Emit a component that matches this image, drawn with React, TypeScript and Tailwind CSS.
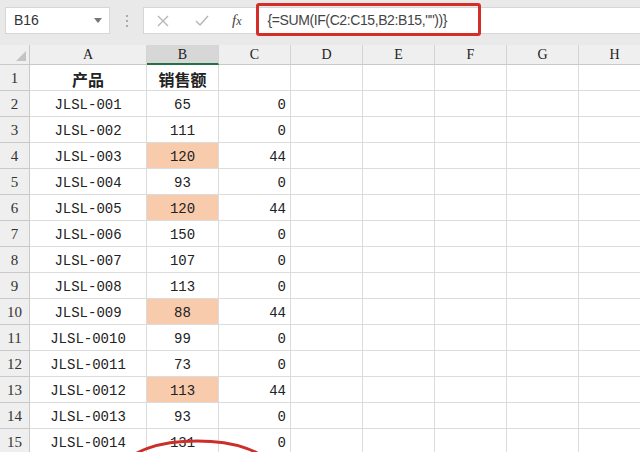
const cols = ["A", "B", "C", "D", "E", "F", "G", "H"];

const rows: [string, string, string, boolean][] = [
  ["JLSL-001", "65", "0", false],
  ["JLSL-002", "111", "0", false],
  ["JLSL-003", "120", "44", true],
  ["JLSL-004", "93", "0", false],
  ["JLSL-005", "120", "44", true],
  ["JLSL-006", "150", "0", false],
  ["JLSL-007", "107", "0", false],
  ["JLSL-008", "113", "0", false],
  ["JLSL-009", "88", "44", true],
  ["JLSL-0010", "99", "0", false],
  ["JLSL-0011", "73", "0", false],
  ["JLSL-0012", "113", "44", true],
  ["JLSL-0013", "93", "0", false],
  ["JLSL-0014", "131", "0", false],
];

const grid = "grid grid-cols-[30px_117px_72px_72px_72px_72px_72px_72px_72px]";
const mono = "font-['Liberation_Mono','Noto_Sans_CJK_SC',monospace]";
const serif = "font-['Liberation_Serif',serif]";

function EmptyCells() {
  return (
    <>
      {[0, 1, 2, 3, 4].map((i) => (
        <div key={i} className="border-r border-b border-[#dcdcdc] bg-white" />
      ))}
    </>
  );
}

function RowHead({ n }: { n: number }) {
  return (
    <div className={`flex items-end justify-center pb-[1px] bg-[#efefef] border-r border-b border-[#c9c9c9] text-[15px] text-[#333] ${serif}`}>
      {n}
    </div>
  );
}

export default function App() {
  return (
    <main className="relative w-[640px] h-[452px] overflow-hidden bg-[#e9e9e9]">
      {/* formula toolbar */}
      <div className="h-[45px] flex items-start pt-[7px] pl-[5px] font-['Liberation_Sans',sans-serif]">
        <div className="w-[105px] h-[27px] bg-white border border-[#d6d6d6] flex items-center justify-between pl-[8px] pr-[7px] text-[14px] text-[#333]">
          <span>B16</span>
          <svg width="8" height="5" viewBox="0 0 8 5">
            <path d="M0 0 L8 0 L4 5 Z" fill="#777" />
          </svg>
        </div>
        <div className="w-[33px] h-[27px] flex flex-col items-center justify-center gap-[3px]">
          <span className="w-[2px] h-[2px] bg-[#aaa]" />
          <span className="w-[2px] h-[2px] bg-[#aaa]" />
          <span className="w-[2px] h-[2px] bg-[#aaa]" />
        </div>
        <div className="relative flex-1 h-[27px] bg-white border-l border-y border-[#d6d6d6] flex items-center">
          <svg className="ml-[13px]" width="12" height="12" viewBox="0 0 12 12">
            <path d="M1 1 L11 11 M11 1 L1 11" stroke="#b5b5b5" strokeWidth="1.3" fill="none" />
          </svg>
          <svg className="ml-[26px]" width="14" height="11" viewBox="0 0 14 11">
            <path d="M1 6 L5 10 L13 1" stroke="#b5b5b5" strokeWidth="1.4" fill="none" />
          </svg>
          <span className={`ml-[23px] italic text-[15px] text-[#444] ${serif}`}>
            f<span className="text-[12px]">x</span>
          </span>
          <div className="absolute left-[112px] top-[-5px] w-[225px] h-[33px] border-[3px] border-[#d52d27] rounded-[3px]" />
          <span className="ml-[26px] text-[14px] text-[#444] tracking-[-0.4px]">
            {'{=SUM(IF(C2:C15,B2:B15,""))}'}
          </span>
        </div>
      </div>

      {/* sheet */}
      <div className={`${grid} text-[#222]`}>
        {/* column header */}
        <div className="h-[20px] bg-[#efefef] border-r border-b border-[#c9c9c9] flex items-end justify-end p-[3px]">
          <svg width="10" height="10" viewBox="0 0 10 10">
            <path d="M10 0 L10 10 L0 10 Z" fill="#c4c4c4" />
          </svg>
        </div>
        {cols.map((c) => (
          <div
            key={c}
            className={`h-[20px] flex items-center justify-center border-r border-[#d4d4d4] text-[14px] ${serif} ${
              c === "B" ? "bg-[#d7d7d7] border-b-2 border-b-[#217346]" : "bg-[#efefef] border-b border-b-[#c9c9c9]"
            }`}
          >
            {c}
          </div>
        ))}

        {/* row 1 */}
        <RowHead n={1} />
        <div className="h-[26px] flex items-center justify-center pt-[2px] border-r border-b border-[#dcdcdc] bg-white font-bold text-[16px] font-['Noto_Sans_CJK_SC',sans-serif]">
          产品
        </div>
        <div className="h-[26px] flex items-center justify-center pt-[2px] border-r border-b border-[#dcdcdc] bg-white font-bold text-[16px] font-['Noto_Sans_CJK_SC',sans-serif]">
          销售额
        </div>
        <div className="border-r border-b border-[#dcdcdc] bg-white" />
        <EmptyCells />

        {rows.map(([name, sales, val, hi], i) => (
          <div key={name} className="contents">
            <RowHead n={i + 2} />
            <div className={`h-[26px] flex items-center justify-center pt-[4px] border-r border-b border-[#dcdcdc] bg-white text-[14px] ${mono}`}>
              {name}
            </div>
            <div
              className={`h-[26px] flex items-center justify-center pt-[4px] border-r border-b border-[#dcdcdc] text-[14px] ${mono} ${
                hi ? "bg-[#f8cbad]" : "bg-white"
              }`}
            >
              {sales}
            </div>
            <div className={`h-[26px] flex items-center justify-end pt-[4px] pr-[4px] border-r border-b border-[#dcdcdc] bg-white text-[14px] ${mono}`}>
              {val}
            </div>
            <EmptyCells />
          </div>
        ))}
      </div>

      {/* red circle annotation */}
      <svg className="absolute left-[120px] top-[430px]" width="160" height="22" viewBox="0 0 160 22">
        <ellipse cx="77" cy="36" rx="70" ry="25" stroke="#cc2f29" strokeWidth="3" fill="none" />
      </svg>
    </main>
  );
}
